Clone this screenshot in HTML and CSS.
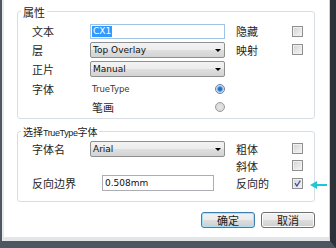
FILE: index.html
```html
<!DOCTYPE html>
<html lang="zh">
<head>
<meta charset="utf-8">
<title>属性</title>
<link rel="stylesheet" href="styles.css">
</head>
<body>
<div class="frame">
  <div class="client">
    <div class="group g1">
      <div class="title">属性</div>
      <div class="grid grid1">
        <span class="lbl">文本</span>
        <div class="input focus"><span class="hl">CX1</span></div>
        <span></span>
        <span class="lbl">隐藏</span>
        <span class="cb"></span>

        <span class="lbl">层</span>
        <div class="select"><span class="val">Top Overlay</span><span class="arrow"></span></div>
        <span></span>
        <span class="lbl">映射</span>
        <span class="cb"></span>

        <span class="lbl">正片</span>
        <div class="select"><span class="val">Manual</span><span class="arrow"></span></div>
        <span></span><span></span><span></span>

        <span class="lbl">字体</span>
        <div class="opt"><span class="optlbl">TrueType</span><span class="radio on"></span></div>
        <span></span><span></span><span></span>

        <span></span>
        <div class="opt"><span class="optlbl cn">笔画</span><span class="radio"></span></div>
        <span></span><span></span><span></span>
      </div>
    </div>

    <div class="group g2">
      <div class="title small">选择<span class="lat">TrueType</span>字体</div>
      <div class="grid grid2">
        <span class="lbl">字体名</span>
        <div class="select"><span class="val">Arial</span><span class="arrow"></span></div>
        <span></span>
        <span class="lbl">粗体</span>
        <span class="cb"></span>

        <span></span><span></span><span></span>
        <span class="lbl">斜体</span>
        <span class="cb"></span>

        <span class="lbl">反向边界</span>
        <div class="input short"><span class="txt">0.508mm</span></div>
        <span></span>
        <span class="lbl">反向的</span>
        <span class="cb checked"><svg viewBox="0 0 11 11" width="11" height="11"><path d="M3 5.2 L4.9 8 L8.3 2.6" fill="none" stroke="#3b52a3" stroke-width="1.3"/></svg></span>
      </div>
    </div>

    <div class="buttons">
      <button class="btn default">确定</button>
      <button class="btn">取消</button>
    </div>
  </div>
  <svg class="pointer" viewBox="0 0 17 8" width="17" height="8"><polygon points="0,4 7,0 7,8" fill="#1ec6d6"/><rect x="6" y="3" width="11" height="2" fill="#1ec6d6"/></svg>
</div>
</body>
</html>
```

FILE: styles.css
```css
* { box-sizing: border-box; }
html, body { margin: 0; padding: 0; background: #fff; }
body {
  width: 336px;
  height: 248px;
  overflow: hidden;
  font-family: "Noto Sans CJK SC", "DejaVu Sans", sans-serif;
  font-size: 11px;
  color: #262626;
}
.frame {
  position: relative;
  width: 336px;
  height: 248px;
  border-left: 2px solid #4d5863;
  border-right: 6px solid #2c3238;
  border-bottom: 7px solid #4b5661;
}
.client {
  height: 241px;
  background: #fff;
  border-left: 2px solid #e7e9eb;
  border-right: 1px solid #cdd1d5;
  border-bottom: 4px solid #e3e6e9;
  display: flex;
  flex-direction: column;
}
.group {
  margin: 0 14px 0 13px;
  border: 1px solid #d8dfe4;
  border-radius: 3px;
  padding-left: 14px;
}
.g1 { margin-top: 11px; padding-bottom: 3px; }
.g2 { margin-top: 12px; padding-bottom: 9px; }
.title {
  width: fit-content;
  margin: -7px 0 0 -11px;
  padding: 0 2px;
  height: 14px;
  line-height: 14px;
  background: #fff;
  font-size: 11px;
  color: #1a1a1a;
  white-space: nowrap;
}
.title.small { font-size: 10px; }
.title .lat { font-family: "Liberation Sans", sans-serif; font-size: 9px; letter-spacing: -0.4px; }
.grid {
  display: grid;
  grid-template-columns: 58px 135px 11px 56px 11px;
  align-items: center;
}
.grid1 { margin-top: 3px; grid-template-rows: 18px 19px 20px 20px 16px; }
.grid2 { margin-top: 1px; grid-template-rows: 17px 17px 18px; }
.lbl { line-height: 14px; white-space: nowrap; }
.input {
  height: 15px;
  border: 1px solid #abadb3;
  background: #fff;
  display: flex;
  align-items: center;
  padding-left: 1px;
  font-family: "DejaVu Sans", sans-serif;
  font-size: 9px;
}
.input.focus { border-color: #9fc3e5; }
.input .hl {
  background: #3399ff;
  color: #fff;
  line-height: 11px;
  padding: 0 1px 0 1px;
  white-space: nowrap;
}
.input.short { margin-left: 12px; width: 112px; height: 16px; padding-left: 2px; }
.input .txt { color: #111; }
.select {
  height: 16px;
  border: 1px solid #8e8f8f;
  border-radius: 2px;
  background: linear-gradient(#f3f3f3, #ececec 50%, #dfdfdf 51%, #d3d3d3);
  display: flex;
  align-items: center;
  justify-content: space-between;
  padding: 0 3px 0 2px;
  font-family: "DejaVu Sans", sans-serif;
  font-size: 9px;
  color: #111;
}
.arrow {
  width: 0; height: 0;
  border-left: 3px solid transparent;
  border-right: 3px solid transparent;
  border-top: 3px solid #000;
  margin-top: 1px;
}
.opt {
  display: flex;
  align-items: center;
  justify-content: space-between;
  padding-left: 2px;
}
.optlbl { font-family: "DejaVu Sans", sans-serif; font-size: 8.5px; color: #3a3a3a; }
.optlbl.cn { font-family: "Noto Sans CJK SC", sans-serif; font-size: 11px; color: #2a2a2a; }
.radio {
  width: 10px; height: 10px;
  border-radius: 50%;
  border: 1px solid #9a9a9a;
  background: radial-gradient(circle, #e8e8e8 0%, #d9d9d9 60%, #f2f2f2 100%);
}
.radio.on {
  border-color: #6b7f99;
  background: radial-gradient(circle, #1e63b0 0, #2b7bd0 1.8px, #9cc6ec 3px, #e9eef3 4px);
}
.cb {
  width: 11px; height: 11px;
  border: 1px solid #8f8f8f;
  background: linear-gradient(135deg, #d2d2d2, #f6f6f6);
  box-shadow: inset 0 0 0 1px #f0f0f0;
  position: relative;
}
.cb svg { position: absolute; left: -1px; top: -1px; }
.buttons {
  display: flex;
  justify-content: flex-end;
  gap: 6px;
  margin: 10px 14px 0 0;
}
.btn {
  width: 54px;
  height: 16px;
  padding: 0;
  border: 1px solid #707070;
  border-radius: 3px;
  background: linear-gradient(#f2f2f2, #ebebeb 50%, #dddddd 51%, #cfcfcf);
  box-shadow: inset 0 0 0 1px #fbfbfb;
  font-family: "Noto Sans CJK SC", sans-serif;
  font-size: 11px;
  line-height: 14px;
  color: #1a1a1a;
}
.btn.default {
  border-color: #3c7fb1;
  box-shadow: inset 0 0 0 1px #a8e0f5;
}
.pointer { position: absolute; left: 308px; top: 181px; }
```
